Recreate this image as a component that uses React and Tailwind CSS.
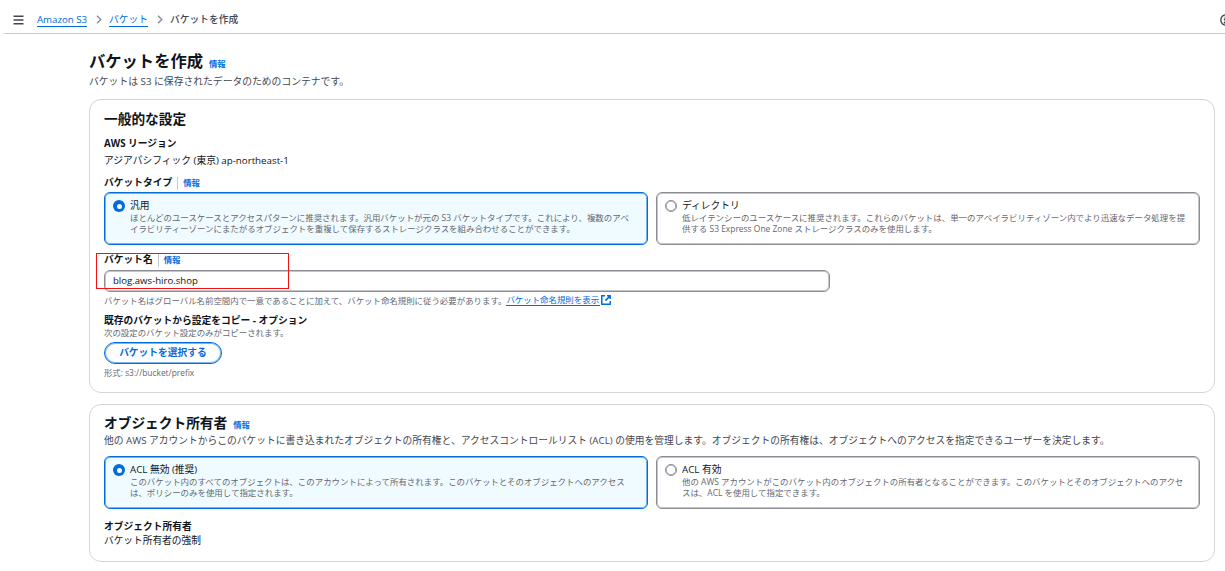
import React from "react";

function InfoLink() {
  return <a className="text-[8.4px] font-bold text-[#006ce0]">情報</a>;
}

function Label({ children, info = false, className = "" }) {
  return (
    <div className={`flex h-[14px] items-center whitespace-nowrap text-[9.75px] font-bold leading-[14px] ${className}`}>
      <span>{children}</span>
      {info && (
        <span className="ml-[5px] flex h-[13px] items-center border-l border-[#c6c6cd] pl-[5px]">
          <InfoLink />
        </span>
      )}
    </div>
  );
}

function Radio({ checked }) {
  return checked ? (
    <span className="mt-[7px] flex h-[12px] w-[12px] shrink-0 items-center justify-center rounded-full bg-[#006ce0]">
      <span className="h-[5px] w-[5px] rounded-full bg-white" />
    </span>
  ) : (
    <span className="mt-[7px] h-[12px] w-[12px] shrink-0 rounded-full border border-[#8c8c94] bg-white shadow-[inset_0_0_0_0.6px_#8c8c94]" />
  );
}

function Tile({ checked = false, title, lines }) {
  return (
    <div
      className={`flex h-[53px] w-[544px] items-start rounded-[6px] border pl-[8px] ${
        checked
          ? "border-[#006ce0] bg-[#f0fbff] shadow-[inset_0_0_0_1px_#006ce080]"
          : "border-[#8c8c94] bg-white shadow-[inset_0_0_0_1px_#8c8c9480]"
      }`}
    >
      <Radio checked={checked} />
      <div className="ml-[5px] mt-[6px] whitespace-nowrap">
        <div className="h-[13px] text-[9.75px] leading-[14px]">{title}</div>
        {lines.map((line) => (
          <div key={line} className="h-[11px] text-[8.45px] leading-[11px] text-[#656871]">
            {line}
          </div>
        ))}
      </div>
    </div>
  );
}

function Chevron() {
  return (
    <svg width="6" height="9" viewBox="0 0 6 9" fill="none" stroke="#8c8c94" strokeWidth="1.4">
      <path d="M1 0.8 4.8 4.5 1 8.2" />
    </svg>
  );
}

export default function App() {
  return (
    <div className="relative h-[571px] w-[1225px] overflow-hidden bg-white font-['Open_Sans','Noto_Sans_CJK_JP',sans-serif] text-[#0f141a]">
      <header className="ml-[4px] flex h-[34px] items-center whitespace-nowrap border-b border-[#c6c6cd] pt-[6px] text-[9.75px] leading-[14px]">
        <svg className="ml-[9px]" width="11" height="10" viewBox="0 0 11 10" stroke="#424650" strokeWidth="1.5">
          <path d="M0.5 1.2h10M0.5 5h10M0.5 8.8h10" />
        </svg>
        <a className="ml-[13px] h-[14px] w-[50px] border-b border-[#006ce0] tracking-[-0.05px] text-[#006ce0]">Amazon S3</a>
        <span className="ml-[9px]"><Chevron /></span>
        <a className="ml-[7px] h-[14px] border-b border-[#006ce0] text-[#006ce0]">バケット</a>
        <span className="ml-[9px]"><Chevron /></span>
        <span className="ml-[7px] font-medium text-[#424650]">バケットを作成</span>
        <svg className="ml-auto mr-[-7px] shrink-0" width="12" height="12" viewBox="0 0 12 12" fill="none" stroke="#424650" strokeWidth="1.4">
          <circle cx="6" cy="6" r="5.2" />
          <path d="M5.3 5.2v3.6M3.8 5.3h1.5M3.8 8.7h3.4M5.3 2.7v1.3" />
        </svg>
      </header>

      <main className="ml-[89px] w-[1126px]">
        <div className="flex h-[22px] items-baseline whitespace-nowrap pt-[15px]">
          <h1 className="text-[16.3px] font-bold leading-[22px]">バケットを作成</h1>
          <span className="ml-[6px]"><InfoLink /></span>
        </div>
        <p className="mt-[19px] h-[14px] whitespace-nowrap text-[9.8px] leading-[14px] text-[#424650]">
          バケットは S3 に保存されたデータのためのコンテナです。
        </p>

        <section className="mt-[10px] h-[294px] rounded-[12px] border border-[#d5d5da] pl-[14px] pt-[9px]">
          <h2 className="h-[20px] text-[13.7px] font-bold leading-[20px]">一般的な設定</h2>
          <Label className="mt-[8px]">AWS リージョン</Label>
          <p className="mt-[3px] h-[14px] text-[9.75px] leading-[14px]">アジアパシフィック (東京) ap-northeast-1</p>
          <Label info className="mt-[8px]">バケットタイプ</Label>
          <div className="mt-[2px] flex gap-[8px]">
            <Tile
              checked
              title="汎用"
              lines={[
                "ほとんどのユースケースとアクセスパターンに推奨されます。汎用バケットが元の S3 バケットタイプです。これにより、複数のアベ",
                "イラビリティーゾーンにまたがるオブジェクトを重複して保存するストレージクラスを組み合わせることができます。",
              ]}
            />
            <Tile
              title="ディレクトリ"
              lines={[
                "低レイテンシーのユースケースに推奨されます。これらのバケットは、単一のアベイラビリティゾーン内でより迅速なデータ処理を提",
                "供する S3 Express One Zone ストレージクラスのみを使用します。",
              ]}
            />
          </div>
          <Label info className="mt-[8px]">バケット名</Label>
          <div className="mt-[3px] flex h-[22px] w-[726px] items-center rounded-[6px] border border-[#8c8c94] pl-[8px] text-[9.6px] shadow-[inset_0_0_0_1px_#8c8c9480]">
            blog.aws-hiro.shop
          </div>
          <div className="mt-[2px] flex h-[12px] items-center whitespace-nowrap text-[8.43px] leading-[11px] text-[#656871]">
            <span>バケット名はグローバル名前空間内で一意であることに加えて、バケット命名規則に従う必要があります。</span>
            <a className="flex h-[12px] items-center border-b border-[#006ce0] pr-[1px] text-[#006ce0]">バケット命名規則を表示</a>
            <svg className="ml-[1px]" width="10" height="10" viewBox="0 0 10 10" fill="none" stroke="#006ce0" strokeWidth="1.5">
              <path d="M4 0.8H0.8v8.4h8.4V6M6 0.8h3.2V4M9.2 0.8 4.4 5.6" />
            </svg>
          </div>
          <Label className="mt-[8px]">既存のバケットから設定をコピー - オプション</Label>
          <p className="mt-[-1px] h-[12px] text-[8.43px] leading-[12px] text-[#656871]">次の設定のバケット設定のみがコピーされます。</p>
          <button className="mt-[3px] flex h-[22px] w-[118px] items-center justify-center whitespace-nowrap rounded-full border border-[#006ce0] text-[9.75px] font-bold text-[#006ce0] shadow-[inset_0_0_0_1px_#006ce080]">
            バケットを選択する
          </button>
          <p className="mt-[3px] h-[11px] text-[8.4px] leading-[11px] text-[#656871]">形式: s3://bucket/prefix</p>
        </section>

        <section className="mt-[11px] h-[158px] rounded-[12px] border border-[#d5d5da] pl-[14px] pt-[9px]">
          <div className="mt-[-4px] flex h-[24px] items-baseline">
            <h2 className="text-[13.7px] font-bold leading-[20px]">オブジェクト所有者</h2>
            <span className="ml-[6px]"><InfoLink /></span>
          </div>
          <p className="h-[14px] whitespace-nowrap text-[9.75px] leading-[14px] text-[#424650]">
            他の AWS アカウントからこのバケットに書き込まれたオブジェクトの所有権と、アクセスコントロールリスト (ACL) の使用を管理します。オブジェクトの所有権は、オブジェクトへのアクセスを指定できるユーザーを決定します。
          </p>
          <div className="mt-[8px] flex gap-[8px]">
            <Tile
              checked
              title="ACL 無効 (推奨)"
              lines={[
                "このバケット内のすべてのオブジェクトは、このアカウントによって所有されます。このバケットとそのオブジェクトへのアクセス",
                "は、ポリシーのみを使用して指定されます。",
              ]}
            />
            <Tile
              title="ACL 有効"
              lines={[
                "他の AWS アカウントがこのバケット内のオブジェクトの所有者となることができます。このバケットとそのオブジェクトへのアクセ",
                "スは、ACL を使用して指定できます。",
              ]}
            />
          </div>
          <Label className="mt-[11px]">オブジェクト所有者</Label>
          <p className="h-[14px] text-[9.7px] leading-[14px]">バケット所有者の強制</p>
        </section>
      </main>

      <div className="absolute left-[96px] top-[253px] h-[36px] w-[193px] border border-[#f01414]" />
    </div>
  );
}
